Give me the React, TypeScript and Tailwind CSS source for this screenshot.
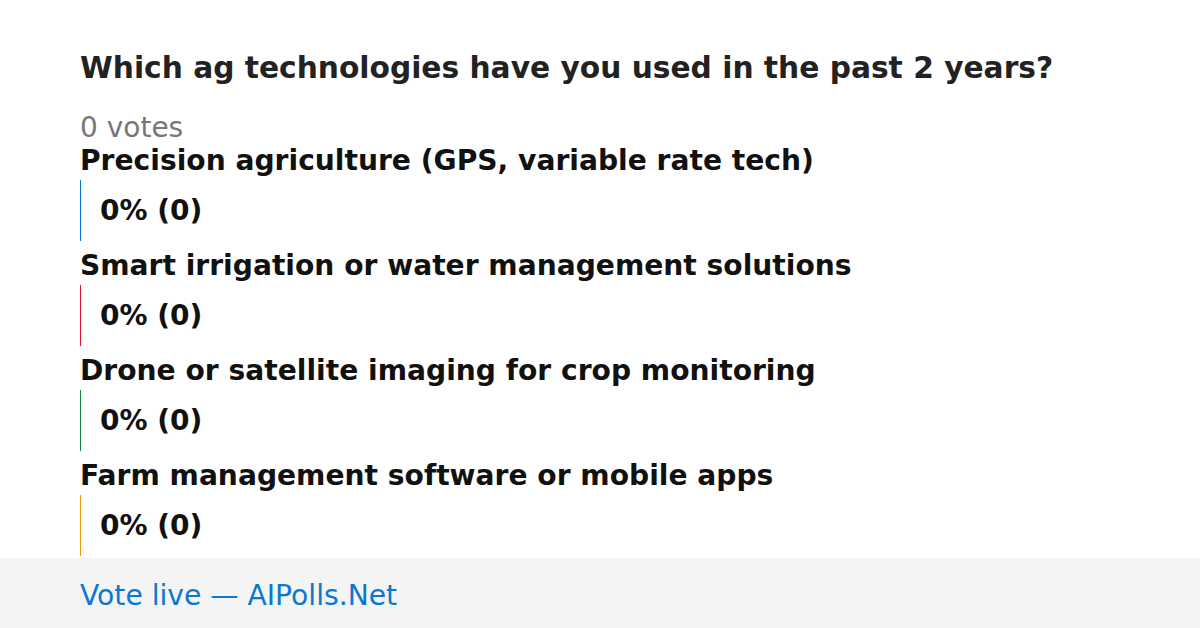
const options = [
  { label: "Precision agriculture (GPS, variable rate tech)", color: "border-[#0a78d1]" },
  { label: "Smart irrigation or water management solutions", color: "border-[#e0102f]" },
  { label: "Drone or satellite imaging for crop monitoring", color: "border-[#0d8c3c]" },
  { label: "Farm management software or mobile apps", color: "border-[#f59a0c]" },
];

export default function App() {
  return (
    <div className="flex h-[628px] w-[1200px] flex-col bg-white font-['DejaVu_Sans',sans-serif]">
      <div className="flex-1 px-20 pt-[50px]">
        <h1 className="text-[29.7px] font-bold leading-[35px] text-[#222]">
          Which ag technologies have you used in the past 2 years?
        </h1>
        <p className="mt-[26px] text-[28px] leading-[33px] text-[#777]">0 votes</p>
        <div className="flex flex-col">
          {options.map((o) => (
            <div key={o.label} className="mb-[8px] last:mb-0">
              <div className="mb-[3px] pt-[1px] text-[28.15px] font-bold leading-[32px] text-[#111]">{o.label}</div>
              <div className={`h-[61px] border-l pl-[19px] pt-[14px] ${o.color}`}>
                <span className="text-[28px] font-bold leading-[33px] text-[#111]">0% (0)</span>
              </div>
            </div>
          ))}
        </div>
      </div>
      <div className="flex h-[70px] items-center bg-[#f4f4f4] px-20 pt-[6px]">
        <span className="text-[28.2px] text-[#0a78d1]">Vote live — AIPolls.Net</span>
      </div>
    </div>
  );
}
